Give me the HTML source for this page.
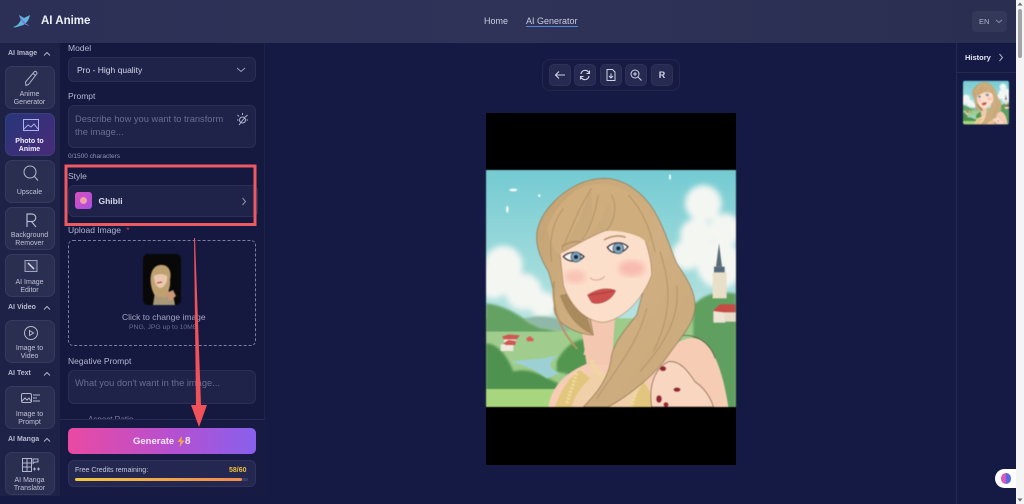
<!DOCTYPE html>
<html><head><meta charset="utf-8"><style>
*{box-sizing:border-box;margin:0;padding:0}
html,body{width:1024px;height:504px;overflow:hidden;background:#151a44;font-family:"Liberation Sans",sans-serif;color:#cfd2e6}
.a{position:absolute}
#hdr{left:0;top:0;width:1016px;height:43px;background:linear-gradient(90deg,#2c3056,#2f3358 50%,#2a2e50)}
#side{left:0;top:43px;width:60px;height:453px;background:#1e2247}
#panel{left:60px;top:43px;width:205px;height:453px;background:#15183f;border-right:1px solid #1f2349}
.lab{position:absolute;left:8px;font-size:7px;font-weight:700;color:#b8bbd0;white-space:nowrap}
.chev{position:absolute;left:43px}
.card{position:absolute;left:4.5px;width:50px;height:43px;border-radius:7px;background:#2a2e50;border:1px solid #353a5e;text-align:center;font-size:7px;line-height:8px;color:#c0c3d6}
.card svg{position:absolute;left:14px;top:3px}
.card span{position:absolute;left:0;right:0;top:24px}
.card.one span{top:28px}
.card.on{background:linear-gradient(135deg,#27367a,#4a2a78);border-color:#3a3f80;color:#f0f0ff;font-weight:700}
.fl{position:absolute;left:68px;font-size:8.5px;color:#b4b7d0;white-space:nowrap}
.box{position:absolute;left:68px;width:187.5px;background:#1f2349;border:1px solid #2b2f55;border-radius:6px}
.ph{position:absolute;font-size:9.3px;color:#696d90;line-height:13px;white-space:nowrap}
.tb{position:absolute;top:64px;width:22px;height:22px;border-radius:5px;background:#262a50;border:1px solid #2e3258}
.tb svg{position:absolute;left:3px;top:3px}
#art,#thumb{filter:blur(.5px)}
</style></head><body>
<div class="a" id="hdr"></div>
<svg class="a" style="left:12px;top:13px" width="20" height="16" viewBox="0 0 20 16"><path d="M1 14C5 13 8 10 9 6L7 2 12 5 18 2C17 7 14 12 8 13 5 14 3 15 1 14Z" fill="#5fb6d8"/><path d="M7 2C10 6 12 10 18 13 13 12 9 10 7 2Z" fill="#7a78e0"/></svg>
<div class="a" style="left:41px;top:15px;font-size:11.500px;font-weight:700;color:#eef0fa">AI Anime</div>
<div class="a" style="left:484px;top:16px;font-size:9px;color:#c9cce2">Home</div>
<div class="a" style="left:526px;top:16px;font-size:9px;color:#c9cce2">AI Generator</div>
<div class="a" style="left:526px;top:26px;width:52px;height:1px;background:#4f86d8"></div>
<div class="a" style="left:972px;top:11px;width:35px;height:21px;border-radius:4px;background:#343858"></div>
<div class="a" style="left:979px;top:17px;font-size:7.500px;color:#aeb2c8">EN</div>
<svg class="a" style="left:995px;top:19px" width="8" height="5" viewBox="0 0 8 5"><path d="M1 1l3 2.500L7 1" fill="none" stroke="#8a8ea8"/></svg>

<div class="a" id="side"></div>
<div class="a" id="panel"></div>
<div style="position:absolute;left:0;top:0">
<div class="lab" style="top:50px">AI Image</div><svg class="chev" style="top:51px" width="8" height="6" viewBox="0 0 8 6"><path d="M1 4.500L4 1.500 7 4.500" fill="none" stroke="#b0b3c8"/></svg>
<div class="card" style="top:66px"><svg width="22" height="18" viewBox="0 0 22 18" style="left:13px"><path d="M7 15.500L6.500 12 15.500 1.500C17 1 18 2 18 3.500L9.500 14.500Z" fill="none" stroke="#b4b7cc"/><path d="M14 3.500L16.500 5.500" stroke="#b4b7cc"/></svg><span>Anime<br>Generator</span></div>
<div class="card on" style="top:113px"><svg width="22" height="16" viewBox="0 0 22 16"><rect x="3.500" y="2.500" width="15" height="11" fill="none" stroke="#a8b0f0"/><path d="M4 12l4-4 3 2 3-3 4 5" fill="none" stroke="#a8b0f0"/></svg><span>Photo to<br>Anime</span></div>
<div class="card one" style="top:160px"><svg width="22" height="18" viewBox="0 0 22 18"><circle cx="10" cy="8" r="6" fill="none" stroke="#b4b7cc"/><path d="M14.500 12.500L18 16.500" stroke="#b4b7cc"/></svg><span>Upscale</span></div>
<div class="card" style="top:207px"><svg width="22" height="18" viewBox="0 0 22 18"><path d="M7 16V3h5a3.500 3.500 0 0 1 0 7.500H7M11.500 10.500L16 16" fill="none" stroke="#b4b7cc" stroke-width="1.200"/></svg><span>Background<br>Remover</span></div>
<div class="card" style="top:254px"><svg width="22" height="18" viewBox="0 0 22 18"><rect x="5" y="2.500" width="12" height="11" fill="#3c4064" stroke="#a0a4bc"/><path d="M8 5l6 6" stroke="#d8dae8" stroke-width="1.500"/></svg><span>AI Image<br>Editor</span></div>
<div class="lab" style="top:304px">AI Video</div><svg class="chev" style="top:305px" width="8" height="6" viewBox="0 0 8 6"><path d="M1 4.500L4 1.500 7 4.500" fill="none" stroke="#b0b3c8"/></svg>
<div class="card" style="top:320px"><svg width="22" height="18" viewBox="0 0 22 18"><circle cx="11" cy="9" r="6.500" fill="none" stroke="#b4b7cc"/><path d="M9.500 6.500v5l4-2.500Z" fill="none" stroke="#b4b7cc"/></svg><span>Image to<br>Video</span></div>
<div class="lab" style="top:370px">AI Text</div><svg class="chev" style="top:371px" width="8" height="6" viewBox="0 0 8 6"><path d="M1 4.500L4 1.500 7 4.500" fill="none" stroke="#b0b3c8"/></svg>
<div class="card" style="top:386px"><svg width="22" height="16" viewBox="0 0 22 16" style="left:14px"><rect x="1.500" y="3.500" width="10" height="9" rx="1.500" fill="none" stroke="#b4b7cc"/><path d="M2 11l3-3 2 2 2-2 2 3M13 5h7M13 8h4M13 11h7" fill="none" stroke="#b4b7cc"/></svg><span>Image to<br>Prompt</span></div>
<div class="lab" style="top:436px">AI Manga</div><svg class="chev" style="top:437px" width="8" height="6" viewBox="0 0 8 6"><path d="M1 4.500L4 1.500 7 4.500" fill="none" stroke="#b0b3c8"/></svg>
<div class="card" style="top:452px"><svg width="22" height="18" viewBox="0 0 22 18" style="left:13px"><path d="M3.500 2.500h9v13h-9ZM8 2.500v13M3.500 7h9M3.500 11h9" fill="none" stroke="#b4b7cc"/><path d="M14 3h5v3h-3l-2 1.500Z" fill="none" stroke="#b4b7cc"/><path d="M14 13h3M15.500 11.500v3M18 13h3M19.500 11.500v3" stroke="#b4b7cc"/></svg><span>AI Manga<br>Translator</span></div>
</div>

<div class="fl" style="top:43px">Model</div>
<div class="box" style="top:57px;height:25px"></div>
<div class="a" style="left:77px;top:65px;font-size:8.500px;color:#d5d7e8">Pro - High quality</div>
<svg class="a" style="left:236px;top:67px" width="10" height="6" viewBox="0 0 10 6"><path d="M1 1l4 3.500L9 1" fill="none" stroke="#9a9eb8"/></svg>
<div class="fl" style="top:91px">Prompt</div>
<div class="box" style="top:105px;height:43px"></div>
<div class="ph" style="left:75px;top:113px">Describe how you want to transform<br>the image...</div>
<svg class="a" style="left:236px;top:112px" width="13" height="14" viewBox="0 0 13 14"><circle cx="6.500" cy="8" r="3" fill="none" stroke="#b0b3c8"/><path d="M6.500 1v2M1.500 3l1.500 1.500M11.500 3L10 4.500M1 8h1.500M10.500 8H12M3 13l7-9" stroke="#b0b3c8"/></svg>
<div class="a" style="left:68px;top:153px;font-size:6.500px;color:#9296b0">0/1500 characters</div>
<div class="fl" style="top:171px">Style</div>
<div class="box" style="top:185px;height:32px;width:190px"></div>
<div class="a" style="left:75px;top:192px;width:17px;height:17px;border-radius:3px;background:linear-gradient(135deg,#d84fc0,#a84fe0)"></div>
<div class="a" style="left:80px;top:197px;width:7px;height:7px;border-radius:50%;background:#f0a0a8"></div>
<div class="a" style="left:98.500px;top:196px;font-size:8.500px;font-weight:700;color:#d8dae8">Ghibli</div>
<svg class="a" style="left:241px;top:197px" width="6" height="9" viewBox="0 0 6 9"><path d="M1.500 1l3 3.500-3 3.500" fill="none" stroke="#8e92ac"/></svg>
<div class="fl" style="top:225px">Upload Image <span style="color:#d8385a;margin-left:3px">*</span></div>
<div class="a" style="left:68px;top:240px;width:187.500px;height:106px;border:1px dashed #7a7ea0;border-radius:5px"></div>
<div class="a" style="left:143px;top:254px;width:38px;height:51px;border-radius:5px;background:#080808;overflow:hidden;filter:blur(.4px)"><svg width="38" height="51" viewBox="0 0 38 51"><path d="M10 51L12 38 24 36 30 40 32 51Z" fill="#a89878"/><path d="M12 42C5 30 6 12 17 11 26 10 29 18 27 26 28 34 24 40 22 44Z" fill="#bfa070"/><path d="M11 22C15 19 22 20 24 22 25 30 20 34 17 34 13 33 11 28 11 22Z" fill="#eac8b0"/><path d="M14 29l5-1" stroke="#a83030"/><path d="M22 40l8-4 3 6-6 5Z" fill="#c89878"/></svg></div>
<div class="a" style="left:122px;top:312px;font-size:8.500px;color:#a4a7c4">Click to change image</div>
<div class="a" style="left:129px;top:324px;font-size:6.800px;color:#6a6e8e">PNG, JPG up to 10MB</div>
<div class="fl" style="top:356px">Negative Prompt</div>
<div class="box" style="top:370px;height:34px"></div>
<div class="ph" style="left:75px;top:377px">What you don't want in the image...</div>
<div class="a" style="left:88px;top:416px;font-size:8px;color:#7d819c;height:3px;overflow:hidden;line-height:8px">Aspect Ratio</div>
<div class="a" style="left:60px;top:419px;width:205px;height:77px;background:#171a42;border-top:1px solid #262a50"></div>
<div class="a" style="left:68px;top:428px;width:187.500px;height:26px;border-radius:5px;background:linear-gradient(90deg,#ea4aa2,#b650d0 55%,#8860ec)"></div>
<div class="a" style="left:133px;top:435.500px;font-size:9.500px;font-weight:700;color:#f5e8f8">Generate</div>
<svg class="a" style="left:177px;top:436px" width="8" height="11" viewBox="0 0 8 11"><path d="M5 0L0.500 6H3.500L2.500 11 7.500 4.500H4.500Z" fill="#f0a848"/></svg>
<div class="a" style="left:185px;top:435.500px;font-size:10px;font-weight:700;color:#f5e8f8">8</div>
<div class="box" style="top:460px;height:27px;background:#242850;border-color:#30345a"></div>
<div class="a" style="left:75px;top:467px;font-size:7px;color:#c4c7da">Free Credits remaining:</div>
<div class="a" style="left:229px;top:467px;font-size:7px;font-weight:700;color:#eec040">58/60</div>
<div class="a" style="left:75px;top:478px;width:173px;height:3px;border-radius:2px;background:#3a3e62"><div style="width:167px;height:3px;border-radius:2px;background:linear-gradient(90deg,#f0c840,#f08a50)"></div></div>

<div class="a" style="left:542px;top:59px;width:138px;height:32px;border-radius:8px;border:1px solid #23274e;background:#171b44"></div>
<div class="tb" style="left:549px"><svg width="14" height="14" viewBox="0 0 14 14"><path d="M12 7H2.500M6 3.500L2.500 7 6 10.500" fill="none" stroke="#d0d3e4" stroke-width="1.100"/></svg></div>
<div class="tb" style="left:574px"><svg width="14" height="14" viewBox="0 0 14 14"><path d="M3 6a4.200 4.200 0 0 1 7.500-2L11.500 5M11 8a4.200 4.200 0 0 1-7.500 2L2.500 9M11.500 2.500V5.500H8.500M2.500 11.500V8.500H5.500" fill="none" stroke="#d0d3e4" stroke-width="1.100"/></svg></div>
<div class="tb" style="left:600px"><svg width="14" height="14" viewBox="0 0 14 14"><path d="M3 1.500h5.500L11 4v8.500H3ZM5 8l2 2 2-2M7 5.500V10" fill="none" stroke="#d0d3e4"/></svg></div>
<div class="tb" style="left:625px"><svg width="14" height="14" viewBox="0 0 14 14"><circle cx="6" cy="6" r="4" fill="none" stroke="#d0d3e4"/><path d="M9 9l3.500 3.500M6 4v4M4 6h4" stroke="#d0d3e4"/></svg></div>
<div class="tb" style="left:651px;font-size:9px;font-weight:700;text-align:center;line-height:20px;color:#d0d3e4">R</div>

<div class="a" style="left:486px;top:113px;width:250px;height:352px;background:#000"></div>
<svg class="a" id="art" style="left:486px;top:170px" width="250" height="237" viewBox="18 15 750 711">
<defs><linearGradient id="sky" x1="0" y1="0" x2="0" y2="1"><stop offset="0" stop-color="#74cbd2"/><stop offset=".6" stop-color="#b4e2e0"/></linearGradient>
<linearGradient id="h" x1="0" y1="0" x2="1" y2="1"><stop offset="0" stop-color="#c4a272"/><stop offset=".5" stop-color="#d0b082"/><stop offset="1" stop-color="#c9a97a"/></linearGradient>
<clipPath id="c"><rect x="18" y="15" width="750" height="711"/></clipPath>
<filter id="b"><feGaussianBlur stdDeviation="9"/></filter><filter id="b2"><feGaussianBlur stdDeviation="3"/></filter></defs>
<symbol id="pic" viewBox="18 15 750 711" width="750" height="711">
<rect x="18" y="15" width="750" height="711" fill="url(#sky)"/>
<g filter="url(#b)" fill="#f4f6f2"><circle cx="670" cy="115" r="55"/><circle cx="650" cy="210" r="50"/><circle cx="735" cy="195" r="50"/><circle cx="620" cy="270" r="45"/><circle cx="720" cy="300" r="70"/><circle cx="70" cy="300" r="58"/><circle cx="40" cy="350" r="50"/><circle cx="130" cy="380" r="55"/><circle cx="190" cy="420" r="40"/></g>
<g fill="#f4fafa"><ellipse cx="100" cy="75" rx="12" ry="4"/><ellipse cx="82" cy="133" rx="4" ry="10"/><ellipse cx="570" cy="36" rx="3" ry="8"/><circle cx="178" cy="92" r="4"/></g>
<rect x="18" y="460" width="750" height="270" fill="#9ccb8a"/>
<path d="M18 415C70 420 110 445 150 475L260 510 200 540H18Z" fill="#63a262" filter="url(#b2)"/>
<path d="M130 462C170 450 210 450 250 470L270 500 180 490Z" fill="#8fb8a8" filter="url(#b2)"/>
<path d="M640 480V420C680 380 720 380 768 385V730H640Z" fill="#5f9f5e" filter="url(#b2)"/>
<path d="M18 500H270V600H18Z" fill="#a0cd8e"/>
<path d="M18 535C60 535 90 590 100 620 150 605 190 635 235 655V680H18Z" fill="#4f9250" filter="url(#b2)"/>
<path d="M230 590C260 530 310 510 350 530L320 640 230 620Z" fill="#539650" filter="url(#b2)"/>
<path d="M95 590C150 580 190 585 235 570 205 590 200 610 240 625L200 640C160 610 125 600 95 590Z" fill="#9cd0d4"/>
<rect x="18" y="672" width="230" height="60" fill="#a8d67e"/>
<g><rect x="72" y="522" width="36" height="12" fill="#f0e8dc"/><rect x="62" y="538" width="38" height="20" fill="#f0e8dc"/><path d="M66 515l20-7 34 3 -10 12H72Z" fill="#cc5a52"/><path d="M70 535l16-10 22 3-2 12H78Z" fill="#cc5a52"/><path d="M138 520l12-7 12 10-4 6H142Z" fill="#d8605a"/></g>
<g><path d="M717 235L708 305H726Z" fill="#5a6a7a"/><rect x="702" y="305" width="32" height="18" fill="#55687c"/><rect x="698" y="322" width="42" height="78" fill="#e8dfc8"/><rect x="700" y="435" width="36" height="38" fill="#ece4d4"/><path d="M698 438l22-20h46v24h-34Z" fill="#c84a44"/><rect x="734" y="442" width="34" height="28" fill="#e8dcc8"/></g>
<path d="M205 726C215 660 260 620 335 590L400 470 340 450 310 570 600 530C670 490 720 560 745 726Z" fill="#f6cdb4"/>
<path d="M300 460H405L395 600H320Z" fill="#f4c8b0"/>
<path d="M250 726C265 670 290 630 320 625L500 640 520 726Z" fill="#f0d0a8"/>
<path d="M225 726C240 680 265 640 300 615L330 640C300 670 280 700 275 726Z" fill="#e2c67e"/>
<path d="M450 726L490 650 510 680 515 726Z" fill="#e2c67e"/>
<path d="M335 585c5 35 30 55 58 50" fill="none" stroke="#eed8a0" stroke-width="14" stroke-dasharray="10 2"/>
<path d="M290 625l-30 90M470 670l-15 56" stroke="#f0dca0" stroke-width="10" stroke-dasharray="6 5"/>
<path d="M515 726C505 660 525 610 565 590 600 585 625 620 645 650 690 680 700 726 700 726Z" fill="#f8d6c0" stroke="#7c5a48" stroke-width="2"/>
<path d="M590 515C640 500 690 530 705 580" fill="none" stroke="#5a4a3a" stroke-width="2"/>
<path d="M375 40C440 42 500 90 535 160 560 210 575 260 590 295 620 340 648 380 645 430 640 480 600 520 565 570 530 625 450 690 385 726H310C345 690 380 650 392 590 395 540 430 500 470 450L500 340 300 300 340 510C300 510 225 480 222 430 225 390 215 350 205 320 185 285 168 250 170 210 175 150 230 90 290 60 320 45 345 40 375 40Z" fill="url(#h)" stroke="#8e7050" stroke-width="2"/>
<path d="M240 390C255 440 290 490 338 508L300 380Z" fill="#a98a5c"/>
<path d="M222 350C215 420 235 490 292 552" fill="none" stroke="#b69466" stroke-width="6"/>
<path d="M240 265C280 245 330 215 380 195 420 195 470 205 495 225 510 270 515 300 515 330 490 400 430 465 370 472 310 470 265 410 250 360Z" fill="#fcdfca" stroke="#94684e" stroke-width="1.500"/>
<ellipse cx="285" cy="335" rx="32" ry="20" fill="#f6b4a8" opacity=".65" filter="url(#b)"/><ellipse cx="455" cy="310" rx="40" ry="24" fill="#f6a8a0" opacity=".65" filter="url(#b)"/>
<path d="M330 60C300 60 230 110 200 190 215 240 225 265 240 270 280 210 315 130 330 75 340 130 345 165 305 225 345 205 375 150 385 110 405 150 395 185 378 198 430 195 470 205 495 228 520 250 525 175 480 110 430 65 380 48 330 60Z" fill="#cfad7c"/>
<g stroke="#a98a60" stroke-width="2.500" fill="none" opacity=".85"><path d="M335 70C300 120 275 190 245 255M355 90C345 150 325 205 305 225M395 90C415 130 400 175 378 198M445 90C490 140 510 190 525 260M540 260C570 350 580 440 520 560M500 430C480 520 420 600 350 700M590 360C600 440 570 520 480 620M250 130C220 170 205 220 215 290"/></g>
<path d="M250 275c15-16 45-18 62 0-15 16-45 20-62 0Z" fill="#f8f6f2" stroke="#30282c" stroke-width="3.500"/><circle cx="288" cy="276" r="15" fill="#7aa4c0" stroke="#3a4a58" stroke-width="2"/><circle cx="288" cy="276" r="6" fill="#20262e"/>
<path d="M382 247c15-15 42-20 62-2-15 22-48 26-62 2Z" fill="#f8f6f2" stroke="#30282c" stroke-width="3.500"/><circle cx="415" cy="250" r="16" fill="#7aa4c0" stroke="#3a4a58" stroke-width="2"/><circle cx="415" cy="250" r="6" fill="#20262e"/>
<path d="M245 245c20-14 40-18 58-14M372 225c20-12 45-16 65-8" fill="none" stroke="#b28a64" stroke-width="4"/>
<path d="M330 338c8 10 32 10 44-4" fill="none" stroke="#d09a80" stroke-width="2.500"/>
<path d="M322 390c20-12 50-26 85-14-12 34-55 46-72 36Z" fill="#cc504c" stroke="#8a3a34" stroke-width="1"/><path d="M330 390c25-3 50-8 70-12" stroke="#8a2a2a" stroke-width="1.800" fill="none"/>
<g fill="#8e2830"><ellipse cx="549" cy="611" rx="9" ry="7"/><ellipse cx="591" cy="674" rx="10" ry="6"/><ellipse cx="537" cy="702" rx="8" ry="11"/><ellipse cx="558" cy="719" rx="7" ry="7"/></g>
</symbol>
<g clip-path="url(#c)"><use href="#pic" x="18" y="15"/></g></svg>

<div class="a" style="left:956px;top:43px;width:60px;height:461px;background:#151a44;border-left:1px solid #252950"></div>
<div class="a" style="left:956px;top:72px;width:60px;height:1px;background:#252950"></div>
<div class="a" style="left:965px;top:53px;font-size:7.500px;font-weight:700;color:#e6e8f4">History</div>
<svg class="a" style="left:998px;top:53px" width="6" height="9" viewBox="0 0 6 9"><path d="M1.500 1l3 3.500-3 3.500" fill="none" stroke="#b0b3c8"/></svg>
<svg class="a" id="thumb" style="left:963px;top:80px;border-radius:3px" width="46" height="45" viewBox="18 15 750 711"><use href="#pic" x="18" y="15"/></svg>

<div class="a" style="left:1016px;top:0;width:8px;height:504px;background:#f4f4f4"></div>
<div class="a" style="left:1018px;top:9px;width:4px;height:49px;border-radius:2px;background:#a4a4a8"></div>
<svg class="a" style="left:1017px;top:2px" width="6" height="4" viewBox="0 0 6 4"><path d="M3 0.500L0.500 3.500H5.500Z" fill="#666"/></svg>
<svg class="a" style="left:1017px;top:498px" width="6" height="4" viewBox="0 0 6 4"><path d="M3 3.500L0.500 0.500H5.500Z" fill="#666"/></svg>
<div class="a" style="left:995px;top:469px;width:21px;height:19px;border-radius:10px 0 0 10px;background:#fff"></div>
<div class="a" style="left:1001px;top:473px;width:10px;height:11px;border-radius:5px;background:linear-gradient(90deg,#d858c0 50%,#5868e0 50%)"></div>

<svg class="a" style="left:60px;top:160px" width="210" height="275" viewBox="60 160 210 275">
<rect x="66" y="166" width="189" height="58.500" fill="none" stroke="#ee5a62" stroke-width="3"/>
<path d="M194 238H195L201 405 207 405 199 427 191 405 196 405Z" fill="#f0525a"/>
</svg>
</body></html>
